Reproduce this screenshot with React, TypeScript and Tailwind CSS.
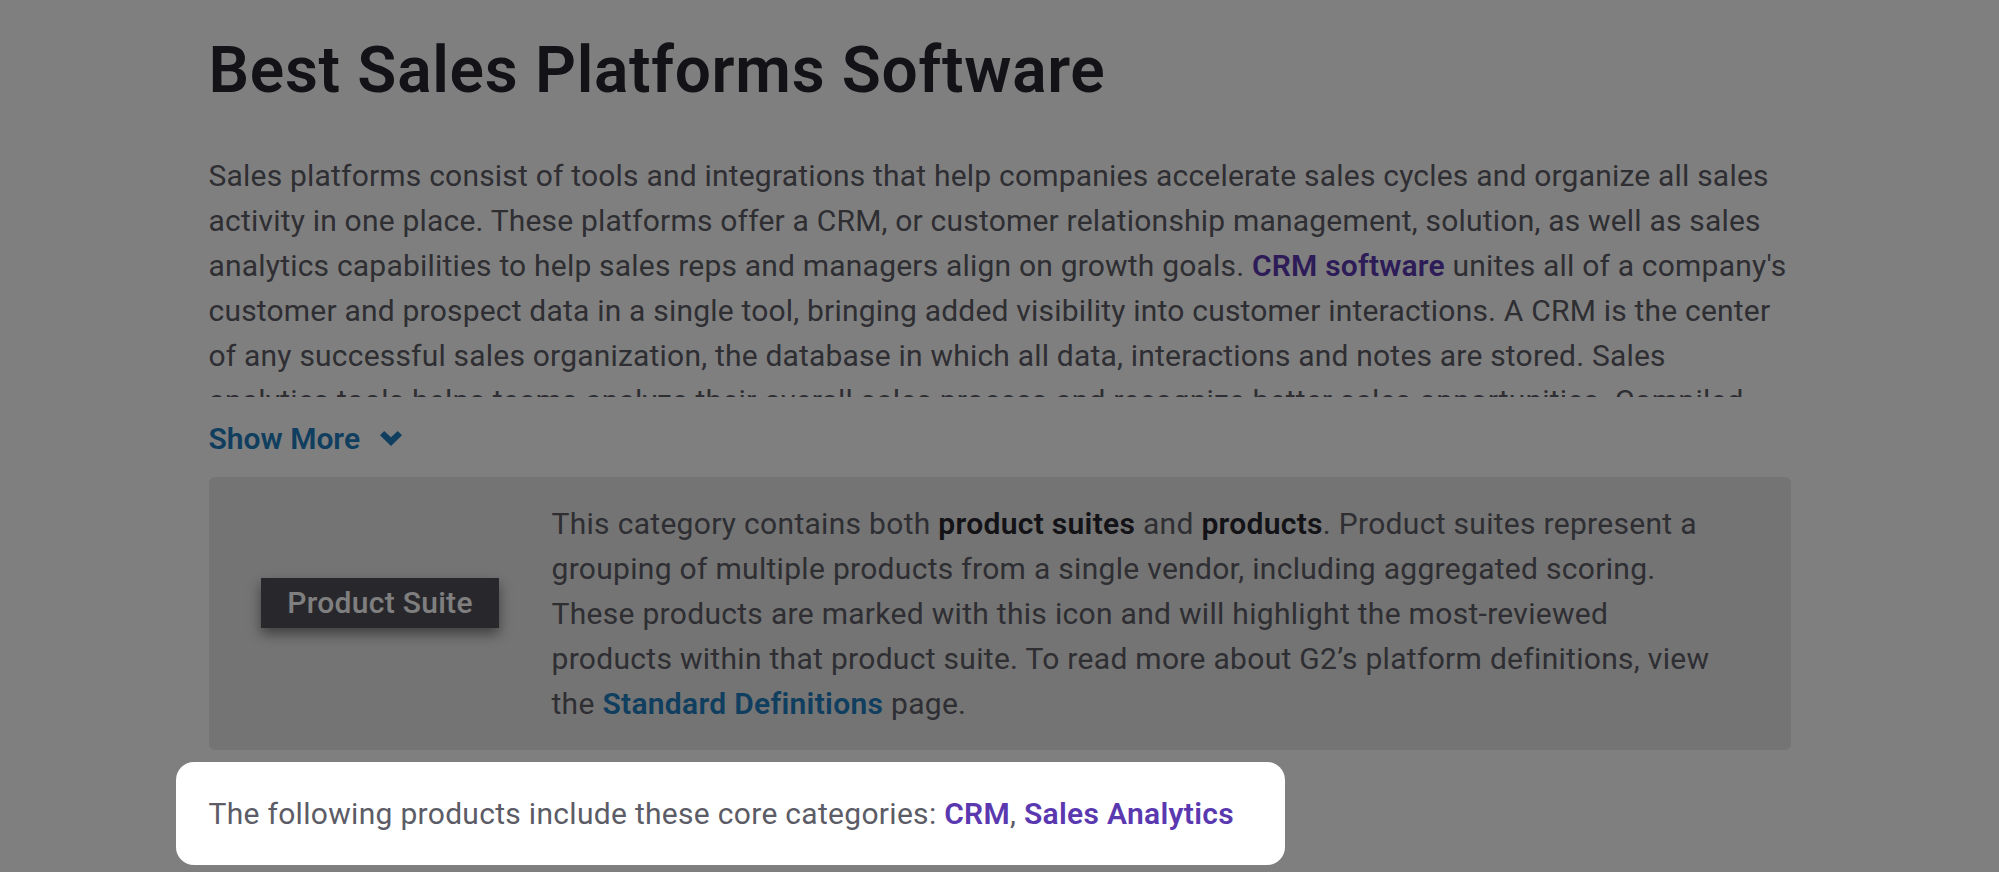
import React from 'react';

const ChevronDown: React.FC<{ className?: string }> = ({ className }) => (
  <svg viewBox="0 0 22 15" className={className} fill="currentColor">
    <path d="M0 4.2 L4.2 0 L11 6.2 L17.8 0 L22 4.2 L11 15 Z" />
  </svg>
);

export default function App() {
  return (
    <div className="relative min-h-screen bg-white font-['Roboto',_'Liberation_Sans',_sans-serif]">
      <div className="mx-auto w-[1582px] pt-[33px]">
        {/* Heading */}
        <h1 className="text-[64px] leading-[76px] font-semibold tracking-[0.7px] text-[#26262e]">
          Best Sales Platforms Software
        </h1>

        {/* Description, clipped */}
        <div className="mt-[44px] h-[244px] w-[1640px] overflow-hidden">
          <p className="whitespace-nowrap text-[30px] leading-[45px] text-[#5c5c66] tracking-[0.2px]">
            Sales platforms consist of tools and integrations that help companies accelerate sales cycles and organize all sales
            <br />
            activity in one place. These platforms offer a CRM, or customer relationship management, solution, as well as sales
            <br />
            analytics capabilities to help sales reps and managers align on growth goals.{' '}
            <a className="font-semibold text-[#5a39b0]">CRM software</a> unites all of a company's
            <br />
            customer and prospect data in a single tool, bringing added visibility into customer interactions. A CRM is the center
            <br />
            of any successful sales organization, the database in which all data, interactions and notes are stored. Sales
            <br />
            analytics tools helps teams analyze their overall sales process and recognize better sales opportunities. Compiled
            <br />
            together, these tools give sales teams a complete picture of their pipeline.
          </p>
        </div>

        <button className="mt-[19px] flex items-center gap-[20px] text-[30px] leading-[45px] font-semibold text-[#1f7cbf]">
          Show More
          <ChevronDown className="w-[22px] h-[15px]" />
        </button>

        {/* Product suite notice */}
        <div className="mt-[16px] flex rounded-md bg-[#e8e8e8] py-[24px]">
          <div className="flex w-[343px] shrink-0 items-center justify-center pb-[22px]">
            <span className="bg-[#505059] px-[26px] py-[2px] text-[30px] leading-[46px] font-medium tracking-[0.3px] text-white shadow-[0_6px_12px_rgba(0,0,0,0.45)]">
              Product Suite
            </span>
          </div>
          <p className="w-[1220px] whitespace-nowrap text-[30px] leading-[45px] text-[#5c5c66] tracking-[0.3px]">
            This category contains both <b className="font-semibold text-[#26262e]">product suites</b> and{' '}
            <b className="font-semibold text-[#26262e]">products</b>. Product suites represent a
            <br />
            grouping of multiple products from a single vendor, including aggregated scoring.
            <br />
            These products are marked with this icon and will highlight the most-reviewed
            <br />
            products within that product suite. To read more about G2’s platform definitions, view
            <br />
            the <a className="font-semibold text-[#1f7cbf]">Standard Definitions</a> page.
          </p>
        </div>

        {/* Highlighted core categories */}
        <div className="relative z-50 -ml-[33px] mt-[12px] w-[1109px] rounded-[18px] bg-white px-[33px] py-[29px]">
          <p className="text-[30px] leading-[45px] text-[#5c5c66] tracking-[0.3px]">
            The following products include these core categories:{' '}
            <a className="font-semibold text-[#5a39b0]">CRM</a>,{' '}
            <a className="font-semibold text-[#5a39b0]">Sales Analytics</a>
          </p>
        </div>
        <div className="h-[200px]" />
      </div>

      {/* Dimming overlay */}
      <div className="fixed inset-0 z-40 bg-black/50" />
    </div>
  );
}
